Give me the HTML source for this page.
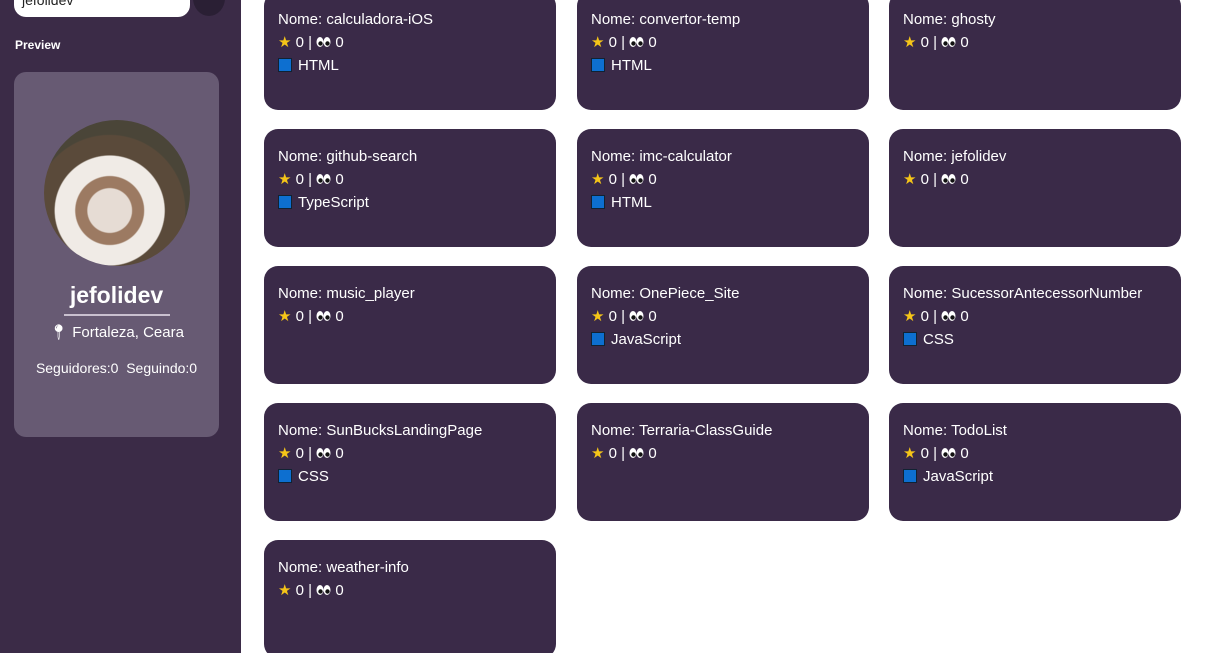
<!DOCTYPE html>
<html><head><style>
*{margin:0;padding:0;box-sizing:border-box}
html,body{width:1206px;height:653px;overflow:hidden}
body{background:#fff;font-family:"Liberation Sans",sans-serif;position:relative}
.side{position:absolute;left:0;top:0;width:241px;height:653px;background:#3b2b47}
.inp{position:absolute;left:14px;top:-20px;width:176px;height:37px;background:#fff;border-radius:12px;font-size:14px;color:#222;padding:6px 8px 0 8px;line-height:28px}
.btn{position:absolute;left:193px;top:-20px;width:32px;height:36px;border-radius:50%;background:#2a1f34}
.prev{position:absolute;left:15px;top:38px;color:#fff;font-weight:bold;font-size:12px}
.pc{position:absolute;left:14px;top:72px;width:205px;height:365px;background:#675a73;border-radius:12px;color:#fff;text-align:center}
.av{position:absolute;left:30px;top:48px;width:146px;height:146px;border-radius:50%;background:radial-gradient(circle at 45% 62%,#e6dcd4 0 18%,#9c7a62 19% 28%,#f0ebe6 29% 45%,#5a4a3a 46% 62%,#4a4538 63%)}
.nm{position:absolute;left:0;width:205px;top:210px;font-size:23px;font-weight:bold}
.ul{position:absolute;left:50px;top:242px;width:106px;height:2px;background:#c9c0cf}
.loc{position:absolute;left:0;width:205px;top:251px;font-size:15px}
.seg{position:absolute;left:0;width:205px;top:288px;font-size:14px}
.c{position:absolute;width:292px;height:118px;background:#3a2a48;border-radius:14px;color:#fff;padding:16px 14px;font-size:15px;line-height:23px}
.s{color:#f5c518}
.e{display:inline-block;width:15px;height:12px;vertical-align:-1px}
.b{display:inline-block;width:14px;height:14px;background:#0d6fd0;border:1px solid #123;vertical-align:-2px;margin-right:6px}
</style></head><body>
<div class="side">
<div class="inp">jefolidev</div><div class="btn"></div>
<div class="prev">Preview</div>
<div class="pc"><div class="av"></div><div class="nm">jefolidev</div><div class="ul"></div>
<div class="loc">&#x1F4CD;&#xFE0E; Fortaleza, Ceara</div><div class="seg">Seguidores:0&nbsp; Seguindo:0</div></div>
</div>
<div id="g"></div>
<script>
var d=[["calculadora-iOS","HTML"],["convertor-temp","HTML"],["ghosty",""],["github-search","TypeScript"],["imc-calculator","HTML"],["jefolidev",""],["music_player",""],["OnePiece_Site","JavaScript"],["SucessorAntecessorNumber","CSS"],["SunBucksLandingPage","CSS"],["Terraria-ClassGuide",""],["TodoList","JavaScript"],["weather-info",""]];
var xs=[264,577,889],h="";
d.forEach(function(r,i){var x=xs[i%3],y=-8+137*Math.floor(i/3);
h+='<div class="c" style="left:'+x+'px;top:'+y+'px">Nome: '+r[0]+'<br><span class="s">★</span> 0 | <svg class="e" viewBox="0 0 15 12"><ellipse cx="4" cy="6" rx="3.5" ry="5" fill="#fff"/><ellipse cx="11" cy="6" rx="3.5" ry="5" fill="#fff"/><circle cx="4.5" cy="7.5" r="2.2" fill="#111"/><circle cx="11.5" cy="7.5" r="2.2" fill="#111"/></svg> 0'+(r[1]?'<br><span class="b"></span>'+r[1]:'')+'</div>';});
document.getElementById("g").innerHTML=h;
</script>
</body></html>
